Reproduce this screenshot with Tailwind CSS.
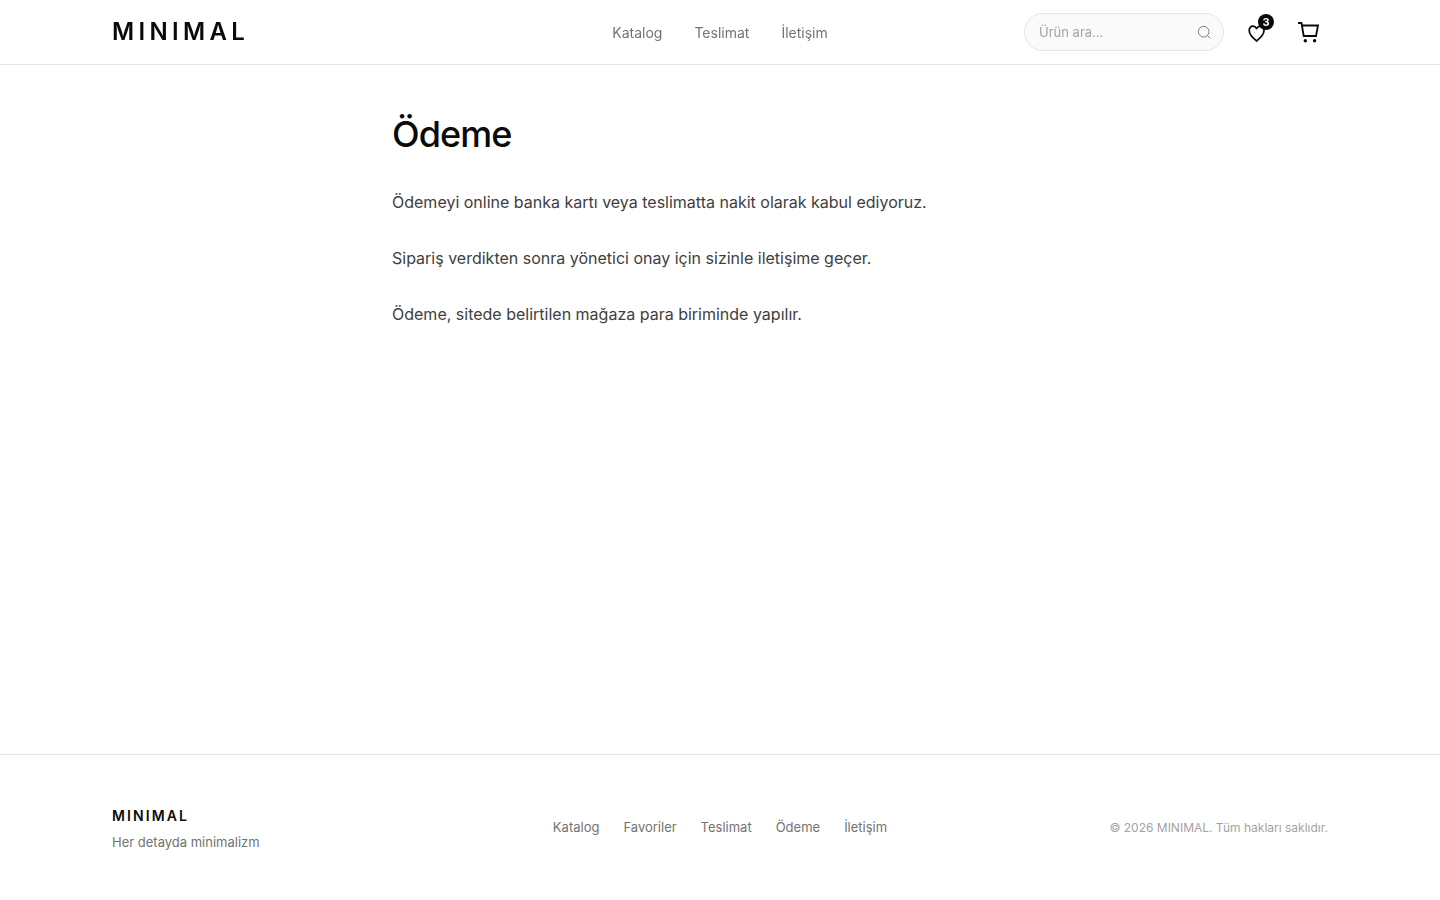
<!DOCTYPE html>
<html lang="tr">
<head>
    <meta charset="UTF-8">
    <meta name="viewport" content="width=device-width, initial-scale=1.0">
    <title>Ödeme | MINIMAL</title>
    <!-- Tailwind CSS CDN -->
    <script src="https://cdn.jsdelivr.net/npm/@tailwindcss/browser@4"></script>
</head>
<body class="flex min-h-screen flex-col bg-white font-[Inter,sans-serif] text-[#0a0a0a]">
    <!-- Header -->
    <header class="sticky top-0 z-10 border-b border-[#e5e5e5] bg-white/95 backdrop-blur-md">
        <div class="mx-auto grid h-16 max-w-7xl grid-cols-[1fr_auto_1fr] items-center px-8">
            <a href="#" class="justify-self-start text-2xl font-semibold tracking-[0.18em]">MINIMAL</a>

            <nav class="flex gap-8 pt-0.5 text-sm text-[#737373]">
                <a href="#" class="hover:text-black">Katalog</a>
                <a href="#" class="hover:text-black">Teslimat</a>
                <a href="#" class="hover:text-black">İletişim</a>
            </nav>

            <div class="flex items-center gap-3 justify-self-end">
                <form class="relative" role="search">
                    <input type="text" name="q" placeholder="Ürün ara..." aria-label="Ürün ara"
                           class="block h-[38px] w-[200px] rounded-full border border-[#e5e5e5] bg-[#fafafa] pr-10 pl-3.5 text-[13px] placeholder-[#a3a3a3] focus:border-black focus:outline-none">
                    <button type="submit" aria-label="Ara" class="absolute top-0 right-3 flex h-full items-center text-[#737373]">
                        <svg class="size-4" viewBox="0 0 24 24" fill="none" stroke="currentColor" stroke-width="1.4">
                            <circle cx="11.5" cy="11.500" r="8"></circle>
                            <path d="M21.500 21.500l-4.350-4.350"></path>
                        </svg>
                    </button>
                </form>

                <a href="#" aria-label="Favoriler" class="relative flex size-10 items-center justify-center">
                    <svg class="size-6" viewBox="0 0 24 24" fill="none" stroke="currentColor" stroke-width="1.7" stroke-linejoin="round">
                        <path d="M12.600 21C10 18.800 5.200 15 5.200 10.400 5.200 7.800 6.800 6.200 8.900 6.200c1.600 0 2.900.9 3.700 2.300.8-1.400 2.100-2.300 3.700-2.300 2.100 0 3.700 1.600 3.700 4.200 0 4.600-4.800 8.400-7.400 10.600z"></path>
                    </svg>
                    <span class="absolute top-0.5 right-0.5 flex size-4 items-center justify-center rounded-full bg-[#0a0a0a] text-[11px] font-bold text-white">3</span>
                </a>

                <a href="#" aria-label="Sepet" class="flex size-10 items-center justify-center">
                    <svg class="size-6" viewBox="0 0 24 24" fill="none" stroke="currentColor" stroke-width="1.8">
                        <path d="M2 3h3.500l2.200 13h12.300l2-10.500H6"></path>
                        <circle cx="9.300" cy="20.800" r="1.700" fill="currentColor" stroke="none"></circle>
                        <circle cx="18.600" cy="20.800" r="1.700" fill="currentColor" stroke="none"></circle>
                    </svg>
                </a>
            </div>
        </div>
    </header>

    <!-- Page content -->
    <main class="mx-auto w-full max-w-[720px] flex-1 px-8 py-12">
        <h1 class="mb-8 text-4xl leading-[43px] font-medium tracking-tight">Ödeme</h1>
        <div class="space-y-7 text-base leading-7 text-[#404040]">
            <p>Ödemeyi online banka kartı veya teslimatta nakit olarak kabul ediyoruz.</p>
            <p>Sipariş verdikten sonra yönetici onay için sizinle iletişime geçer.</p>
            <p>Ödeme, sitede belirtilen mağaza para biriminde yapılır.</p>
        </div>
    </main>

    <!-- Footer -->
    <footer class="border-t border-[#e5e5e5]">
        <div class="mx-auto grid max-w-7xl grid-cols-[1fr_auto_1fr] items-center px-8 py-12">
            <div>
                <p class="mb-1 text-sm leading-[26px] font-semibold tracking-[0.15em]">MINIMAL</p>
                <p class="text-[13px] leading-[19px] text-[#737373]">Her detayda minimalizm</p>
            </div>
            <nav class="flex gap-6 text-[13px] text-[#737373]">
                <a href="#" class="hover:text-black">Katalog</a>
                <a href="#" class="hover:text-black">Favoriler</a>
                <a href="#" class="hover:text-black">Teslimat</a>
                <a href="#" class="hover:text-black">Ödeme</a>
                <a href="#" class="hover:text-black">İletişim</a>
            </nav>
            <p class="justify-self-end text-xs leading-[19px] text-[#a3a3a3]">© 2026 MINIMAL. Tüm hakları saklıdır.</p>
        </div>
    </footer>
</body>
</html>
